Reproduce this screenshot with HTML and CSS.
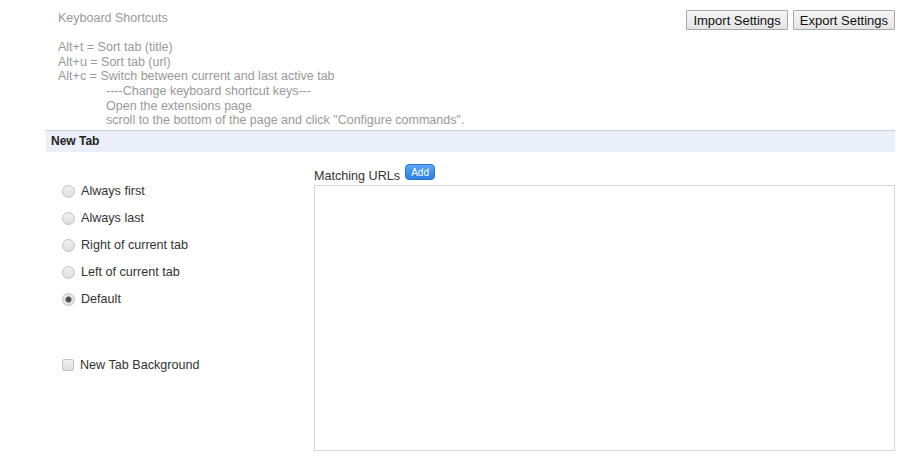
FILE: index.html
```html
<!DOCTYPE html>
<html lang="en">
<head>
    <meta charset="UTF-8">
    <title>Options</title>
    <link rel="stylesheet" href="styles.css">
</head>
<body>
    <div class="page">
        <!-- Shortcuts + import/export -->
        <div class="top">
            <div class="shortcuts">
                Keyboard Shortcuts<br><br>
                Alt+t = Sort tab (title)<br>
                Alt+u = Sort tab (url)<br>
                Alt+c = Switch between current and last active tab<br>
                <div class="indent">
                    ----Change keyboard shortcut keys---<br>
                    Open the extensions page<br>
                    scroll to the bottom of the page and click "Configure commands".
                </div>
            </div>
            <div class="buttons">
                <button class="btn">Import Settings</button>
                <button class="btn">Export Settings</button>
            </div>
        </div>

        <!-- New tab section -->
        <div class="section-title">New Tab</div>
        <div class="section">
            <div class="options">
                <label class="opt"><input type="radio" name="pos"> Always first</label>
                <label class="opt"><input type="radio" name="pos"> Always last</label>
                <label class="opt"><input type="radio" name="pos"> Right of current tab</label>
                <label class="opt"><input type="radio" name="pos"> Left of current tab</label>
                <label class="opt"><input type="radio" name="pos" checked> Default</label>
                <label class="opt bg-opt"><input type="checkbox"> New Tab Background</label>
            </div>
            <div class="urls">
                <div class="urls-head">Matching URLs <span class="add">Add</span></div>
                <textarea class="url-box"></textarea>
            </div>
        </div>
    </div>
</body>
</html>
```

FILE: styles.css
```css
body {
    margin: 0;
    padding: 0;
    background-color: #ffffff;
    font-family: "Liberation Sans", Arial, sans-serif;
}

.page {
    margin-left: 46px;
    width: 849px;
}

/* Top area */
.top {
    display: flex;
    justify-content: space-between;
    align-items: flex-start;
}

.shortcuts {
    padding: 11px 0 2px 12px;
    color: #999999;
    font-size: 12.5px;
    line-height: 14.6px;
}

.indent {
    padding-left: 48px;
}

.buttons {
    display: flex;
    gap: 5px;
    padding-top: 10px;
}

.btn {
    font-family: "Liberation Sans", Arial, sans-serif;
    font-size: 13px;
    color: #111111;
    height: 20px;
    padding: 0 6px;
    background: linear-gradient(#f6f6f6, #e4e4e4);
    border: 1px solid #a9a9a9;
    border-radius: 1px;
}

/* Section header */
.section-title {
    height: 21px;
    line-height: 21px;
    border-top: 1px solid #c3d1e6;
    background-color: #ebeff9;
    padding-left: 5px;
    font-size: 12px;
    font-weight: bold;
    color: #222222;
}

.section {
    display: flex;
}

.options {
    width: 268px;
    padding-top: 26px;
    display: flex;
    flex-direction: column;
}

.opt {
    display: flex;
    align-items: center;
    gap: 6px;
    height: 27px;
    padding-left: 16px;
    font-size: 12.6px;
    color: #333333;
}

.opt input {
    appearance: none;
    margin: 0;
    width: 13px;
    height: 13px;
    border: 1px solid #c2c2c2;
    background: linear-gradient(#f0f0f0, #dedede);
}

.opt input[type="radio"] {
    border-radius: 50%;
}

.opt input[type="radio"]:checked {
    background: radial-gradient(circle, #444 0, #555 2.5px, #e2e2e2 3.5px);
}

.opt input[type="checkbox"] {
    border-radius: 2px;
    width: 12px;
    height: 12px;
}

.bg-opt {
    margin-top: 39px;
}

/* Matching URLs */
.urls {
    padding-top: 12px;
}

.urls-head {
    font-size: 12.6px;
    color: #333333;
    height: 21px;
    display: flex;
    align-items: flex-end;
    gap: 5px;
    line-height: 18px;
}

.add {
    display: inline-block;
    align-self: flex-start;
    width: 30px;
    height: 16px;
    line-height: 15px;
    text-align: center;
    font-size: 10px;
    color: #ffffff;
    background: linear-gradient(#5aa8f5, #2a7fe6);
    border: 1px solid #2a74d0;
    border-radius: 4px;
    box-sizing: border-box;
}

.url-box {
    display: block;
    width: 581px;
    height: 266px;
    box-sizing: border-box;
    border: 1px solid #d6d6d6;
    resize: none;
    margin: 0;
}
```
